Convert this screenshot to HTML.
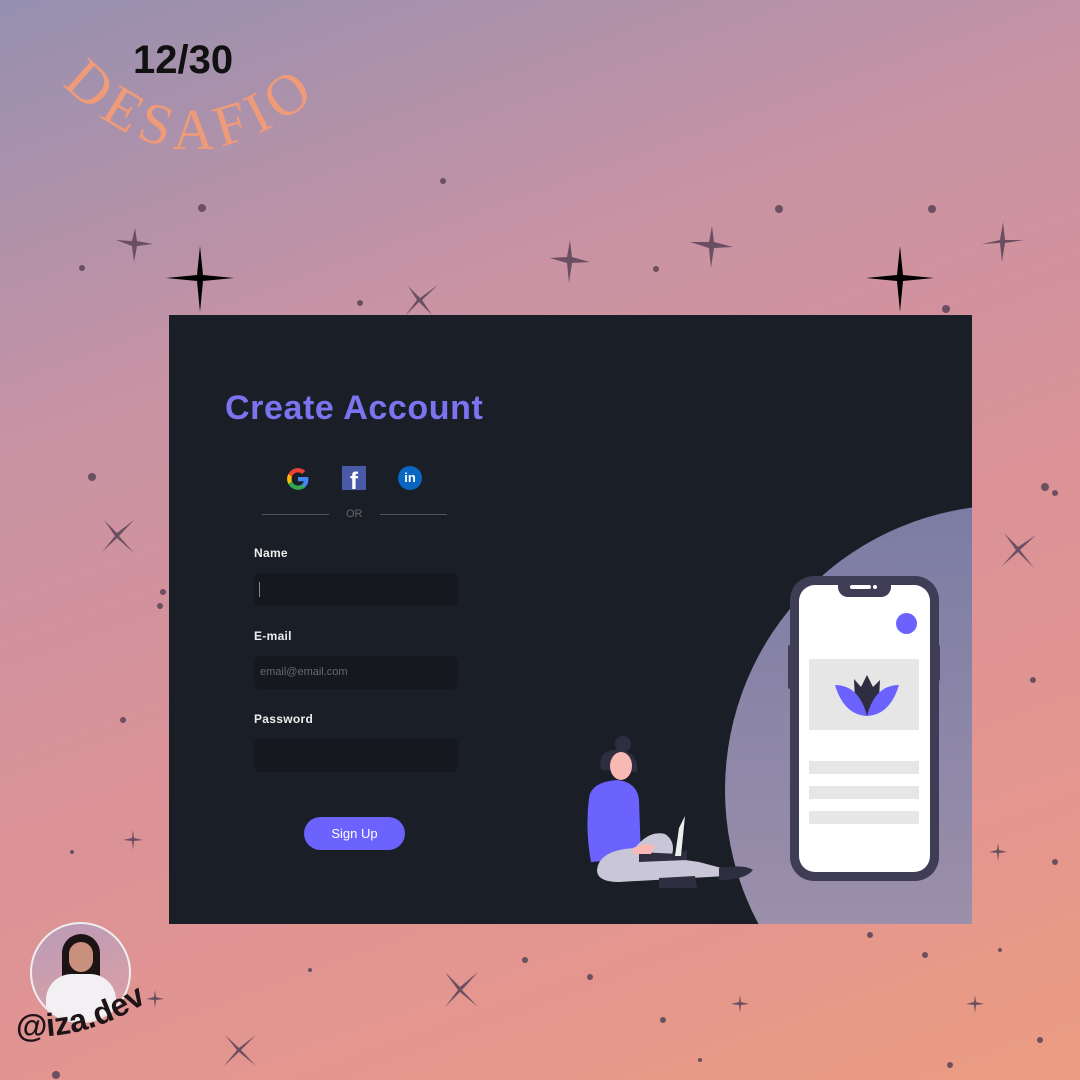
<!DOCTYPE html>
<html><head><meta charset="utf-8"><style>
*{margin:0;padding:0;box-sizing:border-box}
body{width:1080px;height:1080px;overflow:hidden;position:relative;font-family:"Liberation Sans",sans-serif;
background:linear-gradient(160deg,#9590b0 0%,#c893a4 30%,#d99298 55%,#e4968f 80%,#ec9c80 100%);}
.abs{position:absolute}
.panel{left:169px;top:315px;width:803px;height:609px;background:#1a1e26;overflow:hidden}
.circ{left:556px;top:190px;width:570px;height:570px;border-radius:50%;background:linear-gradient(180deg,#7c7ca4,#a696ad)}
h1{position:absolute;left:56px;top:74px;font-size:34px;font-weight:bold;color:#7a74f0;letter-spacing:0.6px}
.lbl{position:absolute;left:85px;font-size:12px;font-weight:bold;color:#eee;letter-spacing:0.3px}
.inp{position:absolute;left:85px;width:204px;height:33px;background:#15181f;border-radius:6px}
.btn{position:absolute;left:135px;top:502px;width:101px;height:33px;border-radius:17px;background:#6c63ff;color:#fff;font-size:13px;text-align:center;line-height:33px}
</style></head><body>
<svg class="abs" style="left:0;top:0" width="1080" height="1080">
<g fill="#6a5060">
<circle cx="202" cy="208" r="4"/><circle cx="443" cy="181" r="3"/><circle cx="360" cy="303" r="3"/><circle cx="500" cy="320" r="4"/><circle cx="656" cy="269" r="3"/><circle cx="779" cy="209" r="4"/><circle cx="932" cy="209" r="4"/><circle cx="946" cy="309" r="4"/><circle cx="82" cy="268" r="3"/>
<circle cx="92" cy="477" r="4"/><circle cx="1045" cy="487" r="4"/><circle cx="1055" cy="493" r="3"/><circle cx="163" cy="592" r="3"/><circle cx="160" cy="606" r="3"/><circle cx="1033" cy="680" r="3"/><circle cx="123" cy="720" r="3"/><circle cx="1055" cy="862" r="3"/><circle cx="72" cy="852" r="2"/>
<circle cx="525" cy="960" r="3"/><circle cx="590" cy="977" r="3"/><circle cx="663" cy="1020" r="3"/><circle cx="870" cy="935" r="3"/><circle cx="925" cy="955" r="3"/><circle cx="1040" cy="1040" r="3"/><circle cx="950" cy="1065" r="3"/><circle cx="310" cy="970" r="2"/><circle cx="56" cy="1075" r="4"/><circle cx="700" cy="1060" r="2"/><circle cx="1000" cy="950" r="2"/>
</g>
<g fill="#000">
<path d="M200 246 L203 275 L234 278 L203 281 L200 312 L197 281 L166 278 L197 275Z"/>
<path d="M900 246 L903 275 L934 278 L903 281 L900 312 L897 281 L866 278 L897 275Z"/>
</g>
<g fill="#6a4f62">
<path d="M135 228 L137 241 L153 244 L137 246 L134 262 L132 246 L116 240 L132 241Z"/>
<path d="M570 240 L572 257 L590 262 L572 263 L569 283 L567 263 L550 258 L567 257Z"/>
<path d="M712 226 L714 242 L733 247 L714 248 L711 268 L709 248 L690 242 L709 242Z"/>
<path d="M1003 222 L1005 240 L1024 240 L1005 243 L1002 262 L1000 243 L982 244 L1000 240Z"/>
<path d="M408 286 L420 298 L438 285 L422 300 L432 315 L419 302 L405 316 L417 300Z"/>
<path d="M104 520 L117 533 L134 520 L119 536 L134 553 L117 538 L102 552 L115 536Z"/>
<path d="M1004 533 L1018 547 L1036 535 L1020 550 L1034 568 L1018 552 L1002 566 L1016 550Z"/>
<path d="M445 972 L460 987 L478 972 L462 990 L478 1007 L460 992 L445 1007 L458 990Z"/>
<path d="M225 1035 L239 1048 L256 1035 L241 1050 L256 1066 L239 1052 L224 1066 L237 1050Z"/>
<path d="M133 830 L134 838 L143 840 L134 841 L133 850 L132 841 L123 840 L132 838Z"/>
<path d="M998 843 L999 850 L1007 852 L999 853 L998 861 L997 853 L989 852 L997 850Z"/>
<path d="M155 990 L156 997 L164 999 L156 1000 L155 1008 L154 1000 L146 999 L154 997Z"/>
<path d="M740 995 L741 1002 L749 1004 L741 1005 L740 1013 L739 1005 L731 1004 L739 1002Z"/>
<path d="M975 995 L976 1002 L984 1004 L976 1005 L975 1013 L974 1005 L966 1004 L974 1002Z"/>
</g>
</svg>
<div class="abs" style="left:133px;top:38px;font-size:40px;font-weight:bold;color:#111">12/30</div>
<svg class="abs" style="left:0;top:0" width="380" height="220">
<defs><path id="arc" d="M62 84 Q 190 214 330 84"/></defs>
<text font-family="Liberation Serif,serif" font-size="58" fill="#ef9a78"><textPath href="#arc" textLength="285">DESAFIO</textPath></text>
</svg>
<div class="abs panel">
<div class="abs circ"></div>
<h1>Create Account</h1>
<svg class="abs" style="left:116px;top:151px" width="26" height="26" viewBox="0 0 24 24"><path d="M21.6 12.2c0-.7-.1-1.4-.2-2H12v3.9h5.4a4.6 4.6 0 0 1-2 3v2.5h3.2c1.9-1.7 3-4.3 3-7.4z" fill="#4285f4"/><path d="M12 22c2.7 0 5-.9 6.6-2.4l-3.2-2.5c-.9.6-2 1-3.4 1-2.6 0-4.8-1.8-5.6-4.1H3.1v2.6A10 10 0 0 0 12 22z" fill="#34a853"/><path d="M6.4 14c-.2-.6-.3-1.3-.3-2s.1-1.4.3-2V7.4H3.1a10 10 0 0 0 0 9.2z" fill="#fbbc05"/><path d="M12 5.9c1.5 0 2.8.5 3.8 1.5l2.9-2.9A10 10 0 0 0 3.1 7.4L6.4 10C7.2 7.7 9.4 5.9 12 5.9z" fill="#ea4335"/></svg>
<div class="abs" style="left:173px;top:151px;width:24px;height:24px;background:#4a59a8;overflow:hidden"><span style="position:absolute;left:8px;top:2px;color:#fff;font-weight:bold;font-size:24px">f</span></div>
<div class="abs" style="left:229px;top:151px;width:24px;height:24px;border-radius:50%;background:#0a66c2;color:#fff;font-weight:bold;font-size:13px;text-align:center;line-height:24px">in</div>
<div class="abs" style="left:93px;top:199px;width:67px;height:1px;background:#555"></div>
<div class="abs" style="left:211px;top:199px;width:67px;height:1px;background:#555"></div>
<div class="abs" style="left:177px;top:193px;font-size:11px;color:#666">OR</div>
<div class="lbl" style="top:231px">Name</div>
<div class="inp" style="top:258px"><div class="abs" style="left:5px;top:9px;width:1px;height:15px;background:#888"></div></div>
<div class="lbl" style="top:314px">E-mail</div>
<div class="inp" style="top:341px;color:#6a6670;font-size:11px;padding:10px 6px">email@email.com</div>
<div class="lbl" style="top:397px">Password</div>
<div class="inp" style="top:424px"></div>
<div class="btn">Sign Up</div>
<div class="abs" style="left:619px;top:330px;width:6px;height:24px;background:#3f3d56;border-radius:2px"></div>
<div class="abs" style="left:619px;top:352px;width:6px;height:22px;background:#3f3d56;border-radius:2px"></div>
<div class="abs" style="left:766px;top:330px;width:5px;height:36px;background:#3f3d56;border-radius:2px"></div>
<div class="abs" style="left:621px;top:261px;width:149px;height:305px;background:#3f3d56;border-radius:24px"></div>
<div class="abs" style="left:630px;top:270px;width:131px;height:287px;background:#fff;border-radius:16px"></div>
<div class="abs" style="left:669px;top:266px;width:53px;height:16px;background:#3f3d56;border-radius:0 0 10px 10px"></div>
<div class="abs" style="left:681px;top:270px;width:21px;height:4px;background:#fff;border-radius:2px"></div>
<div class="abs" style="left:704px;top:270px;width:4px;height:4px;background:#fff;border-radius:50%"></div>
<div class="abs" style="left:727px;top:298px;width:21px;height:21px;background:#6c63ff;border-radius:50%"></div>
<div class="abs" style="left:640px;top:344px;width:110px;height:71px;background:#e6e6e6"></div>
<svg class="abs" style="left:665px;top:358px" width="66" height="46" viewBox="0 0 66 46">
<path d="M20 6 L27 14 L33 2 L39 14 L46 7 L45 28 L33 43 L21 28Z" fill="#2f2e41"/>
<path d="M1 12 Q25 12 33 43 Q10 42 1 12Z" fill="#6c63ff"/><path d="M65 12 Q41 12 33 43 Q56 42 65 12Z" fill="#6c63ff"/>
</svg>
<div class="abs" style="left:640px;top:446px;width:110px;height:13px;background:#e6e6e6"></div>
<div class="abs" style="left:640px;top:471px;width:110px;height:13px;background:#e6e6e6"></div>
<div class="abs" style="left:640px;top:496px;width:110px;height:13px;background:#e6e6e6"></div>
<svg class="abs" style="left:410px;top:415px" width="180" height="160" viewBox="0 0 180 160">
<circle cx="44" cy="14" r="8" fill="#2f2e41"/>
<path d="M22 40 Q18 18 40 20 Q60 22 58 42 Z" fill="#2f2e41"/>
<ellipse cx="42" cy="36" rx="11" ry="14" fill="#f8b9b4"/>
<path d="M10 68 Q12 52 38 50 Q58 52 60 70 L62 128 L12 132 Q6 100 10 68Z" fill="#6c63ff"/>
<path d="M18 140 Q20 120 56 118 Q70 100 86 104 Q98 112 92 128 L120 132 L150 140 L148 146 L40 152 Q18 152 18 140Z" fill="#c9c6d8"/>
<path d="M60 122 L100 124 L108 120 L108 130 L60 132 Z" fill="#2f2e41"/>
<path d="M100 98 L106 86 L102 126 L96 126Z" fill="#eee"/>
<path d="M80 148 L116 146 L118 158 L80 158Z" fill="#2f2e41"/>
<path d="M140 138 Q165 134 174 140 Q166 150 140 150Z" fill="#2f2e41"/>
<path d="M54 118 Q66 112 76 116 L72 124 L54 124Z" fill="#f8b9b4"/>
</svg>
</div>
<div class="abs" style="left:30px;top:922px;width:101px;height:101px;border-radius:50%;border:2px solid #eee;background:linear-gradient(160deg,#b99bb9,#e0a0a0);overflow:hidden">
<div class="abs" style="left:30px;top:10px;width:38px;height:72px;border-radius:19px 19px 6px 6px;background:#1c1414"></div>
<div class="abs" style="left:37px;top:18px;width:24px;height:30px;border-radius:12px;background:#c9907e"></div>
<div class="abs" style="left:14px;top:50px;width:70px;height:60px;border-radius:26px 26px 0 0;background:#f2f0f2"></div>
</div>
<svg class="abs" style="left:0;top:970px" width="190" height="100">
<defs><path id="arc2" d="M16 66 Q85 72 150 30"/></defs>
<text font-family="Liberation Sans,sans-serif" font-weight="bold" font-size="32" fill="#1e1418"><textPath href="#arc2">@iza.dev</textPath></text>
</svg>
</body></html>
